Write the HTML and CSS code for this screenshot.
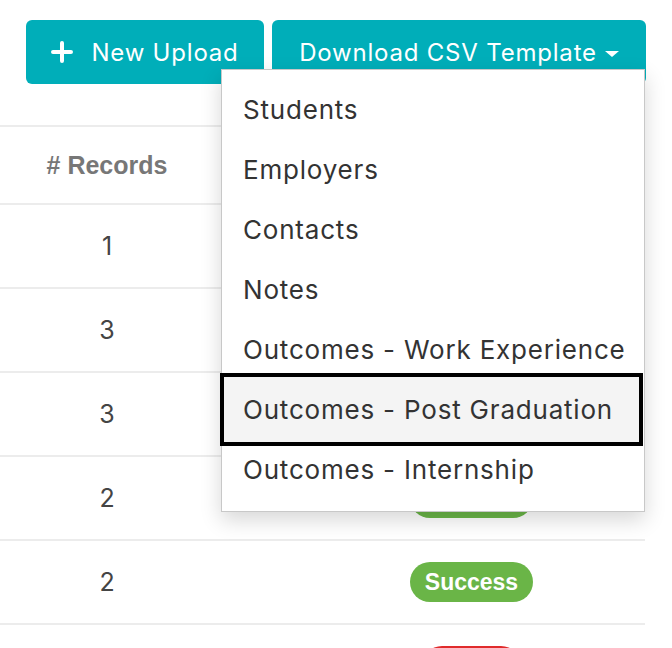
FILE: index.html
```html
<!DOCTYPE html>
<html>
<head>
<meta charset="utf-8">
<link rel="stylesheet" href="styles.css">
</head>
<body>
<div class="toolbar">
  <button class="btn btn-upload">
    <svg class="plus" width="22" height="22" viewBox="0 0 22 22"><path d="M11 2v18M2 11h18" stroke="#fff" stroke-width="4" stroke-linecap="round"/></svg>
    <span>New Upload</span>
  </button>
  <div class="dropdown">
    <button class="btn btn-download">
      <span>Download CSV Template</span>
      <span class="caret"></span>
    </button>
    <ul class="menu">
      <li>Students</li>
      <li>Employers</li>
      <li>Contacts</li>
      <li>Notes</li>
      <li>Outcomes - Work Experience</li>
      <li class="focused">Outcomes - Post Graduation</li>
      <li>Outcomes - Internship</li>
    </ul>
  </div>
</div>
<table class="grid">
  <thead>
    <tr><th class="c1"># Records</th><th class="c2"></th></tr>
  </thead>
  <tbody>
    <tr><td class="c1">1</td><td class="c2"><span class="badge ok">Success</span></td></tr>
    <tr><td class="c1">3</td><td class="c2"><span class="badge ok">Success</span></td></tr>
    <tr><td class="c1">3</td><td class="c2"><span class="badge ok">Success</span></td></tr>
    <tr><td class="c1">2</td><td class="c2"><span class="badge ok">Success</span></td></tr>
    <tr><td class="c1">2</td><td class="c2"><span class="badge ok">Success</span></td></tr>
    <tr><td class="c1"></td><td class="c2"><span class="badge fail">Failed</span></td></tr>
  </tbody>
</table>
</body>
</html>
```

FILE: styles.css
```css
html, body { margin: 0; padding: 0; background: #fff; }
body {
  font-family: "Inter", "Liberation Sans", sans-serif;
  color: #333;
  width: 672px;
  height: 648px;
  overflow: hidden;
}

.toolbar {
  display: flex;
  justify-content: flex-end;
  gap: 8px;
  padding: 20px 26px 0 0;
}

.btn {
  height: 64px;
  border: none;
  border-radius: 6px;
  background: #00aeb9;
  color: #fff;
  font-family: "Inter", sans-serif;
  font-size: 24px;
  letter-spacing: 0.8px;
  display: flex;
  align-items: center;
  justify-content: center;
  padding: 0;
  cursor: pointer;
}
.btn-upload { width: 238px; gap: 18px; }
.dropdown { position: relative; }
.btn-download { width: 374px; gap: 8px; }
.caret {
  width: 0; height: 0;
  border-left: 7.5px solid transparent;
  border-right: 7.5px solid transparent;
  border-top: 6.5px solid #fff;
  margin-top: 3px;
}

.menu {
  position: absolute;
  top: 49px;
  right: 1px;
  width: 424px;
  box-sizing: border-box;
  margin: 0;
  padding: 10px 0 11px;
  list-style: none;
  background: #fff;
  border: 1px solid #c8c8c8;
  box-shadow: 0 8px 20px rgba(0,0,0,0.16);
  z-index: 10;
}
.menu li {
  height: 60px;
  line-height: 60px;
  padding-left: 21px;
  font-size: 26px;
  letter-spacing: 0.8px;
  color: #333;
}
.menu li.focused {
  background: #f4f4f4;
  box-shadow: 0 0 0 4px #000;
  height: 65px;
  line-height: 65px;
  margin: -3px 5px -2px 2px;
  padding-left: 19px;
  position: relative;
}

.grid {
  margin-top: 41px;
  width: 645px;
  border-collapse: collapse;
}
.grid th, .grid td {
  border-top: 2px solid #ececec;
  text-align: center;
  padding: 0;
}
.grid th {
  height: 76px;
  font-family: "Liberation Sans", Arial, sans-serif;
  font-weight: bold;
  font-size: 25px;
  color: #777;
}
.grid td {
  height: 82px;
  font-size: 25px;
  color: #444;
}
.c1 { width: 214px; }
.grid td.c2 { padding-left: 84px; }
.badge {
  display: inline-block;
  font-family: "Liberation Sans", Arial, sans-serif;
  font-weight: bold;
  font-size: 23px;
  color: #fff;
  border-radius: 20px;
  padding: 0 15px;
  height: 40px;
  line-height: 40px;
  vertical-align: middle;
}
.ok { background: #6ab547; }
.fail { background: #e02b2b; padding: 0 16px; }
```
